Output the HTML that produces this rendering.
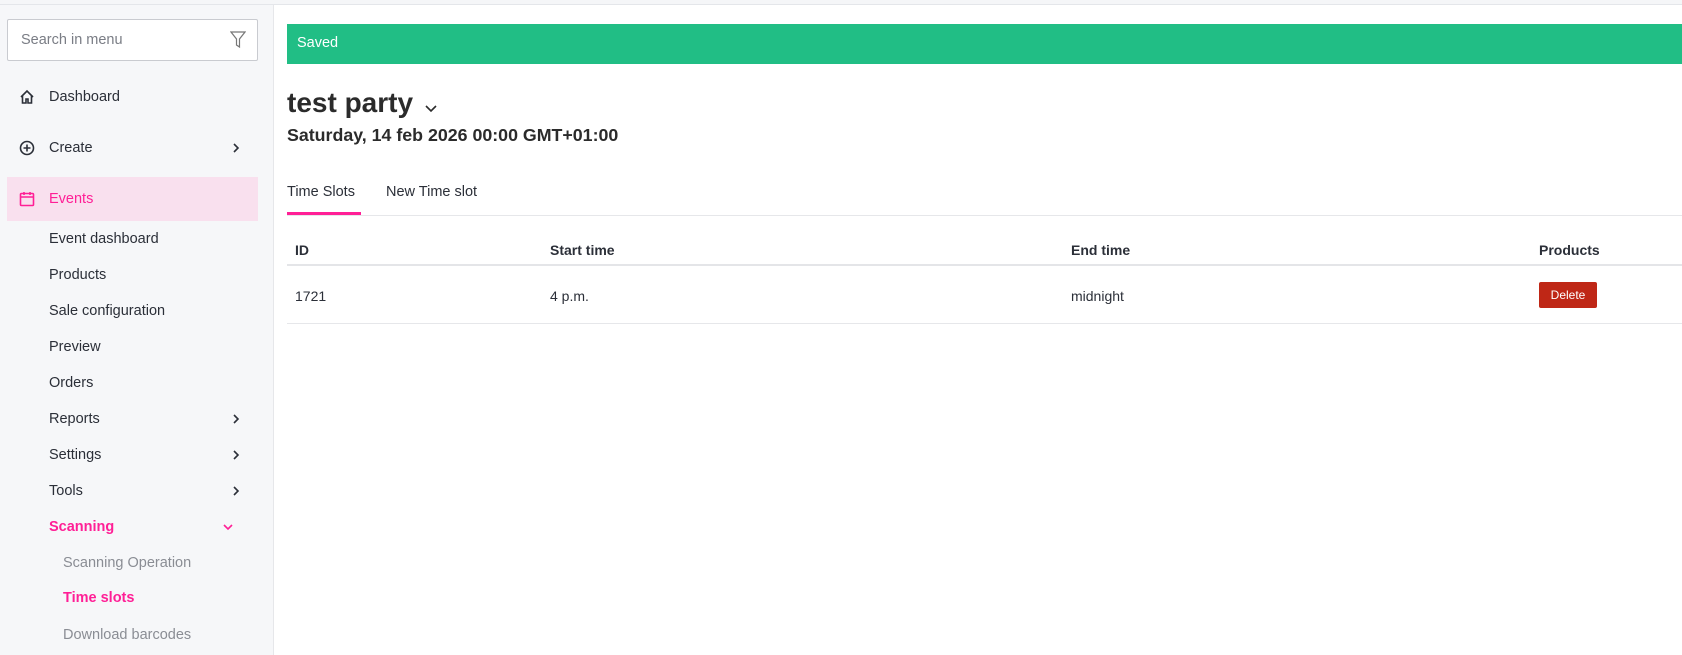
<!DOCTYPE html>
<html><head><meta charset="utf-8"><style>
*{box-sizing:border-box;margin:0;padding:0}
body{width:1682px;height:655px;overflow:hidden;background:#fff;font-family:"Liberation Sans",sans-serif;color:#2b2f38;position:relative}
.top{position:absolute;left:0;top:0;width:1682px;height:5px;background:#f5f6f8;border-bottom:1px solid #e4e6ea}
.side{position:absolute;left:0;top:5px;width:274px;height:650px;background:#f6f7f9;border-right:1px solid #e6e7ea}
.search{position:absolute;left:7px;top:19px;width:251px;height:42px;background:#fff;border:1px solid #c9cbd0;border-radius:2px;font-size:14.5px;color:#7a7d85;padding:12px 0 0 13px}
.search svg{position:absolute;right:11px;top:11px}
.it{position:absolute;left:49px;font-size:14.5px;color:#2b2f38;transform:translateY(-50%)}
.sub{left:63px;color:#8a8d94}
.pink{color:#ff1f96;font-weight:bold}
.ico{position:absolute;left:19px}
.chev{position:absolute;left:232px}
.band{position:absolute;left:7px;top:177px;width:251px;height:44px;background:#f9e0ee}
.green{position:absolute;left:287px;top:24px;width:1395px;height:40px;background:#21be85;color:#fff;font-size:14.5px;padding:11px 0 0 10px}
h1{position:absolute;left:287px;top:87px;font-size:28px;font-weight:bold;color:#2b2b2b}
.date{position:absolute;left:287px;top:125px;font-size:17.8px;font-weight:bold;color:#2b2b2b}
.tab{position:absolute;top:184px;font-size:14.5px;color:#2b2f38}
.ul{position:absolute;left:287px;top:212px;width:74px;height:3px;background:#ff1f96}
.hl{position:absolute;left:287px;width:1395px}
.th{position:absolute;top:242px;font-size:14px;font-weight:bold;color:#2b2f38}
.td{position:absolute;top:288px;font-size:14px;color:#2b2f38}
.btn{position:absolute;left:1539px;top:282px;width:58px;height:26px;background:#bf2716;border-radius:2px;color:#fff;font-size:12px;text-align:center;line-height:26px}
</style></head><body>
<div class="top"></div>
<div class="side"></div>
<div class="search">Search in menu
<svg width="16" height="18" viewBox="0 0 16 18" fill="none" stroke="#777" stroke-width="1.2"><path d="M1 1h14l-5.5 7v8l-3-2V8z"/></svg></div>

<svg class="ico" style="top:89px" width="16" height="16" viewBox="0 0 16 16" fill="none" stroke="#2b2f38" stroke-width="1.6"><path d="M2 8L8 2l6 6M3.5 6.5V14h3.5v-4h2v4h3.5V6.5"/></svg>
<div class="it" style="top:97px">Dashboard</div>
<svg class="ico" style="top:140px" width="16" height="16" viewBox="0 0 16 16" fill="none" stroke="#2b2f38" stroke-width="1.6"><circle cx="8" cy="8" r="6.5"/><path d="M8 4.5v7M4.5 8h7"/></svg>
<div class="it" style="top:148px">Create</div>
<svg class="chev" style="top:142px" width="8" height="12" viewBox="0 0 8 12" fill="none" stroke="#2b2f38" stroke-width="1.6"><path d="M2 2l4 4-4 4"/></svg>
<div class="band"></div>
<svg class="ico" style="top:191px" width="16" height="16" viewBox="0 0 16 16" fill="none" stroke="#ff1f96" stroke-width="1.6"><rect x="1.5" y="2.5" width="13" height="12" rx="1"/><path d="M1.5 6h13M5 1v3M11 1v3"/></svg>
<div class="it" style="top:199px;color:#ff1f96">Events</div>

<div class="it" style="top:239px">Event dashboard</div>
<div class="it" style="top:275px">Products</div>
<div class="it" style="top:311px">Sale configuration</div>
<div class="it" style="top:347px">Preview</div>
<div class="it" style="top:383px">Orders</div>
<div class="it" style="top:419px">Reports</div>
<svg class="chev" style="top:413px" width="8" height="12" viewBox="0 0 8 12" fill="none" stroke="#2b2f38" stroke-width="1.6"><path d="M2 2l4 4-4 4"/></svg>
<div class="it" style="top:455px">Settings</div>
<svg class="chev" style="top:449px" width="8" height="12" viewBox="0 0 8 12" fill="none" stroke="#2b2f38" stroke-width="1.6"><path d="M2 2l4 4-4 4"/></svg>
<div class="it" style="top:491px">Tools</div>
<svg class="chev" style="top:485px" width="8" height="12" viewBox="0 0 8 12" fill="none" stroke="#2b2f38" stroke-width="1.6"><path d="M2 2l4 4-4 4"/></svg>
<div class="it pink" style="top:527px">Scanning</div>
<svg class="chev" style="left:222px;top:523px" width="12" height="8" viewBox="0 0 12 8" fill="none" stroke="#ff1f96" stroke-width="1.6"><path d="M2 2l4 4 4-4"/></svg>
<div class="it sub" style="top:563px">Scanning Operation</div>
<div class="it sub pink" style="top:598px">Time slots</div>
<div class="it sub" style="top:635px">Download barcodes</div>

<div class="green">Saved</div>
<h1>test party</h1>
<svg style="position:absolute;left:424px;top:104px" width="14" height="9" viewBox="0 0 14 9" fill="none" stroke="#2b2b2b" stroke-width="1.6"><path d="M2 2l5 5 5-5"/></svg>
<div class="date">Saturday, 14 feb 2026 00:00 GMT+01:00</div>
<div class="tab" style="left:287px">Time Slots</div>
<div class="tab" style="left:386px">New Time slot</div>
<div class="hl" style="top:215px;height:1px;background:#e6e7ea"></div>
<div class="ul"></div>
<div class="th" style="left:295px">ID</div>
<div class="th" style="left:550px">Start time</div>
<div class="th" style="left:1071px">End time</div>
<div class="th" style="left:1539px">Products</div>
<div class="hl" style="top:264px;height:2px;background:#e4e5e8"></div>
<div class="td" style="left:295px">1721</div>
<div class="td" style="left:550px">4 p.m.</div>
<div class="td" style="left:1071px">midnight</div>
<div class="btn">Delete</div>
<div class="hl" style="top:323px;height:1px;background:#e6e7ea"></div>
</body></html>
